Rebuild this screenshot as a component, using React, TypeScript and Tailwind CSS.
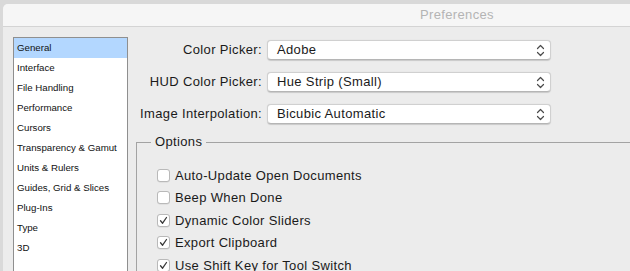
import React from 'react'

const categories = [
  'General',
  'Interface',
  'File Handling',
  'Performance',
  'Cursors',
  'Transparency & Gamut',
  'Units & Rulers',
  'Guides, Grid & Slices',
  'Plug-Ins',
  'Type',
  '3D',
]

const pickers = [
  { label: 'Color Picker:', value: 'Adobe' },
  { label: 'HUD Color Picker:', value: 'Hue Strip (Small)' },
  { label: 'Image Interpolation:', value: 'Bicubic Automatic' },
]

const options = [
  { label: 'Auto-Update Open Documents', checked: false },
  { label: 'Beep When Done', checked: false },
  { label: 'Dynamic Color Sliders', checked: true },
  { label: 'Export Clipboard', checked: true },
  { label: 'Use Shift Key for Tool Switch', checked: true },
]

export default function App() {
  return (
    <div
      className="w-[630px] h-[271px] overflow-hidden bg-[#d9d9d9] flex"
      style={{ fontFamily: '"Liberation Sans", Arial, sans-serif' }}
    >
      {/* Window */}
      <div className="ml-[3px] mt-[4px] w-[720px] shrink-0 flex flex-col bg-[#ececec] rounded-tl-[5px] overflow-hidden">
        {/* Title bar */}
        <div className="h-[23px] shrink-0 bg-[#f6f6f6] border-b border-[#d4d4d4] flex items-center">
          <span className="ml-[417px] text-[13px] tracking-[0.35px] text-[#b4b4b4]">Preferences</span>
        </div>

        {/* Body */}
        <div className="flex flex-1 pl-[10px] pt-[10px]">
          {/* Category list */}
          <div className="w-[115px] h-[260px] shrink-0 bg-white border border-[#8f8f8f] flex flex-col">
            {categories.map((c, i) => (
              <div
                key={c}
                className={`h-[20px] flex items-center pl-[3px] text-[9.7px] text-[#111] ${
                  i === 0 ? 'bg-[#b3d7ff]' : ''
                }`}
              >
                {c}
              </div>
            ))}
          </div>

          {/* Settings */}
          <div className="flex-1 flex flex-col">
            <div className="flex flex-col gap-[12px] pt-[3px]">
              {pickers.map(p => (
                <div key={p.label} className="flex items-center h-[20px]">
                  <span className="w-[134px] text-right text-[13px] tracking-[0.35px] text-[#1a1a1a]">{p.label}</span>
                  <div className="ml-[5px] w-[284px] h-[20px] bg-white rounded-[4px] border border-[#d0d0d0] border-b-[#b5b5b5] shadow-[0_0.5px_1px_rgba(0,0,0,0.15)] flex items-center justify-between pl-[9px] pr-[5px]">
                    <span className="text-[13px] tracking-[0.35px] text-[#1a1a1a]">{p.value}</span>
                    <svg width="9" height="13" viewBox="0 0 9 13" fill="none" stroke="#4a4a4a" strokeWidth="1.2" strokeLinecap="round" strokeLinejoin="round">
                      <path d="M1.5 4.5 L4.5 1.5 L7.5 4.5" />
                      <path d="M1.5 8.5 L4.5 11.5 L7.5 8.5" />
                    </svg>
                  </div>
                </div>
              ))}
            </div>

            {/* Options group */}
            <fieldset className="mt-[10px] ml-[8px] border-l border-t border-[#a3a3a3] flex-1">
              <legend className="ml-[14px] px-[4px] text-[13px] tracking-[0.35px] text-[#1a1a1a] leading-[16px]">Options</legend>
              <div className="flex flex-col pl-[20px] pt-[14px]">
                {options.map(o => (
                  <label key={o.label} className="h-[22.5px] flex items-center gap-[5px] text-[13px] tracking-[0.35px] text-[#1a1a1a]">
                    <span className="w-[13px] h-[13px] shrink-0 bg-white rounded-[3px] border border-[#b9b9b9] shadow-[0_0.5px_0.5px_rgba(0,0,0,0.1)] flex items-center justify-center">
                      {o.checked && (
                        <svg width="9" height="9" viewBox="0 0 9 9" fill="none" stroke="#3a3a3a" strokeWidth="1.3" strokeLinecap="round" strokeLinejoin="round">
                          <path d="M1.5 4.8 L3.6 7.2 L7.5 1.5" />
                        </svg>
                      )}
                    </span>
                    {o.label}
                  </label>
                ))}
              </div>
            </fieldset>
          </div>
        </div>
      </div>
    </div>
  )
}
